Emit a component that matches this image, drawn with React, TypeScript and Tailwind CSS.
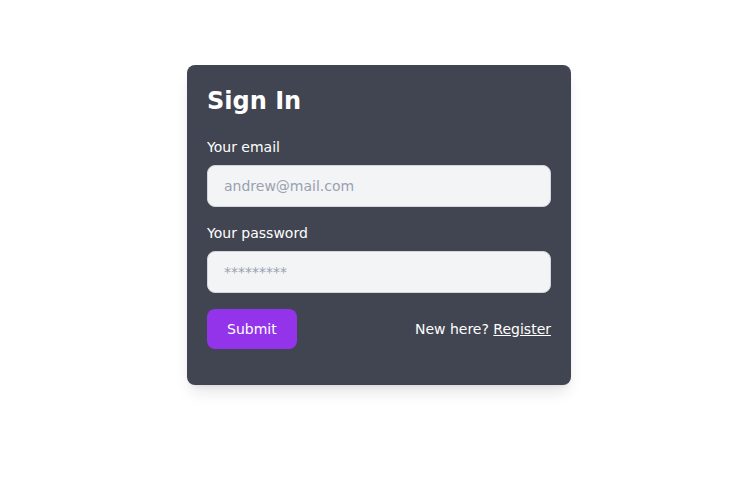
import React from 'react';

const App: React.FC = () => {
  return (
    <div className="min-h-screen bg-white pt-[65px] pl-3 flex justify-center items-start font-['DejaVu_Sans',sans-serif]">
      <div className="w-96 rounded-lg bg-[#414551] p-5 pb-9 shadow-lg">
        <h1 className="text-2xl font-bold text-white mb-5">Sign In</h1>
        <form className="flex flex-col gap-4" onSubmit={(e) => e.preventDefault()}>
          <div>
            <label className="block mb-2 text-sm text-white">Your email</label>
            <input
              type="email"
              placeholder="andrew@mail.com"
              className="block w-full rounded-lg border border-gray-300 bg-gray-100 px-4 py-2.5 text-sm text-gray-900 placeholder:text-gray-400 outline-none"
            />
          </div>
          <div>
            <label className="block mb-2 text-sm text-white">Your password</label>
            <input
              type="password"
              placeholder="*********"
              className="block w-full rounded-lg border border-gray-300 bg-gray-100 px-4 py-2.5 text-sm text-gray-900 placeholder:text-gray-400 outline-none"
            />
          </div>
          <div className="flex items-center justify-between">
            <button type="submit" className="rounded-lg bg-[#9333ea] px-5 py-2.5 text-sm text-white">
              Submit
            </button>
            <p className="text-sm text-white">
              New here? <a href="#" className="underline">Register</a>
            </p>
          </div>
        </form>
      </div>
    </div>
  );
};

export default App;
